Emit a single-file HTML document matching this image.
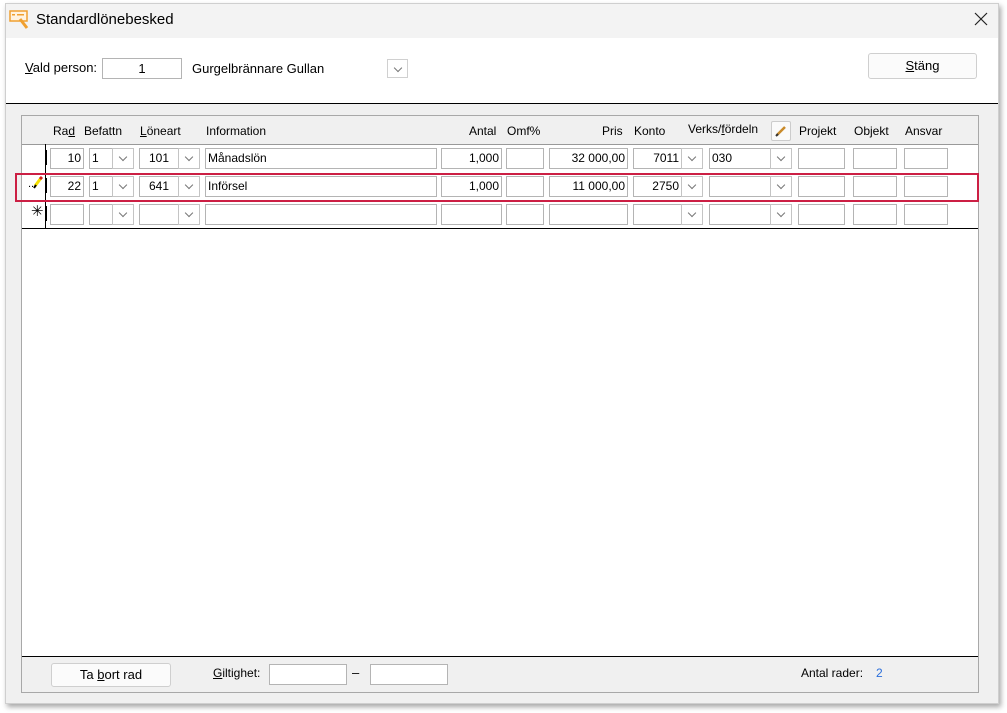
<!DOCTYPE html>
<html><head><meta charset="utf-8"><style>
*{box-sizing:border-box;margin:0;padding:0}
body{width:1007px;height:713px;background:#fff;position:relative;overflow:hidden;font-family:"Liberation Sans",Arial,sans-serif;font-size:12px;color:#000}
.a{position:absolute}
.win{left:5px;top:3px;width:994px;height:701px;background:#f0f0f0;border:1px solid #cfcfcf;box-shadow:2px 3px 5px rgba(0,0,0,.35)}
.in{position:absolute;height:21px;background:#fff;border:1px solid #b4b4b4;font-size:12px;line-height:19px;padding:0 2px;white-space:nowrap}
.r{text-align:right}
.dd{position:absolute;height:21px;width:22px;background:#fff;border:1px solid #c4c4c4}
.dd:after{content:"";position:absolute;left:7px;top:5px;width:5px;height:5px;border-right:1px solid #777;border-bottom:1px solid #777;transform:rotate(45deg)}
.tk{position:absolute;left:46px;width:1px;height:15px;background:#000}
.h{position:absolute;top:124px;font-size:12px}
.btn{position:absolute;background:#fbfbfb;border:1px solid #cfcfcf;border-radius:3px;text-align:center;font-size:13px}
u{text-decoration:underline}
</style></head><body>
<div class="a win"></div>
<div class="a" style="left:6px;top:4px;width:992px;height:34px;background:#f3f3f3"></div>
<div class="a" style="left:6px;top:38px;width:992px;height:65px;background:#fff"></div>
<div class="a" style="left:6px;top:103px;width:992px;height:1px;background:#000"></div>
<svg class="a" style="left:9px;top:9px" width="22" height="22"><rect x="1" y="2" width="17" height="10" fill="#fff3e0" stroke="#f0a030" stroke-width="1.5"/><rect x="3" y="5" width="3" height="1.5" fill="#f0a030"/><rect x="8" y="5" width="7" height="1.5" fill="#f0a030"/><line x1="11" y1="10" x2="18" y2="19" stroke="#f0a030" stroke-width="3"/></svg>
<div class="a" style="left:36px;top:11px;font-size:15px">Standardlönebesked</div>
<svg class="a" style="left:974px;top:12px" width="14" height="14"><path d="M1 1L13 13M13 1L1 13" stroke="#222" stroke-width="1.2"/></svg>
<div class="a" style="left:25px;top:60px;font-size:13px"><u>V</u>ald person:</div>
<div class="in" style="left:102px;top:58px;width:80px;height:21px;text-align:center;font-size:13px">1</div>
<div class="a" style="left:192px;top:61px;font-size:13px">Gurgelbrännare Gullan</div>
<div class="dd" style="left:387px;top:59px;width:21px;height:19px;border-color:#d0d0d0"></div>
<div class="btn" style="left:868px;top:53px;width:109px;height:26px;line-height:24px"><u>S</u>täng</div>

<div class="a" style="left:21px;top:115px;width:958px;height:578px;border:1px solid #a8a8a8;background:#f0f0f0"></div>
<div class="a" style="left:22px;top:145px;width:956px;height:511px;background:#fff"></div>
<div class="a" style="left:22px;top:144px;width:956px;height:1px;background:#999"></div>
<div class="a" style="left:45px;top:144px;width:1px;height:85px;background:#000"></div>
<div class="a" style="left:22px;top:228px;width:956px;height:1px;background:#000"></div>
<div class="a" style="left:22px;top:656px;width:956px;height:1px;background:#000"></div>

<div class="h" style="left:53px">Ra<u>d</u></div>
<div class="h" style="left:84px">Befattn</div>
<div class="h" style="left:140px"><u>L</u>öneart</div>
<div class="h" style="left:206px">Information</div>
<div class="h" style="left:469px">Antal</div>
<div class="h" style="left:507px">Omf%</div>
<div class="h" style="left:602px">Pris</div>
<div class="h" style="left:634px">Konto</div>
<div class="h" style="left:688px;top:122px">Verks/<u>f</u>ördeln</div>
<div class="a" style="left:771px;top:121px;width:20px;height:20px;background:#fafafa;border:1px solid #ccc;border-radius:2px"><svg width="18" height="18"><line x1="5" y1="13" x2="13" y2="5" stroke="#c98a2a" stroke-width="2.5"/><line x1="4" y1="14" x2="6" y2="12" stroke="#333" stroke-width="2"/></svg></div>
<div class="h" style="left:799px">Projekt</div>
<div class="h" style="left:854px">Objekt</div>
<div class="h" style="left:905px">Ansvar</div>

<div class="tk" style="top:150px"></div><div class="tk" style="top:178px"></div><div class="tk" style="top:206px"></div>
<div class="a" style="left:28px;top:178px;font-size:11px">..</div>
<svg class="a" style="left:32px;top:175px" width="12" height="14"><line x1="3" y1="11" x2="9" y2="3" stroke="#f5e000" stroke-width="3"/><line x1="8" y1="4" x2="10" y2="2" stroke="#d02020" stroke-width="3"/><line x1="2" y1="13" x2="4" y2="10" stroke="#000" stroke-width="2"/></svg>
<div class="a" style="left:31px;top:202px;font-size:15px">✳</div>

<div class="in r" style="left:50px;top:148px;width:34px">10</div>
<div class="in" style="left:89px;top:148px;width:24px">1</div><div class="dd" style="left:112px;top:148px"></div>
<div class="in" style="left:139px;top:148px;width:40px;text-align:center">101</div><div class="dd" style="left:178px;top:148px"></div>
<div class="in" style="left:205px;top:148px;width:232px">Månadslön</div>
<div class="in r" style="left:441px;top:148px;width:61px">1,000</div>
<div class="in" style="left:506px;top:148px;width:38px"></div>
<div class="in r" style="left:549px;top:148px;width:79px">32 000,00</div>
<div class="in r" style="left:633px;top:148px;width:49px">7011</div><div class="dd" style="left:681px;top:148px"></div>
<div class="in" style="left:709px;top:148px;width:62px">030</div><div class="dd" style="left:770px;top:148px"></div>
<div class="in" style="left:798px;top:148px;width:47px"></div>
<div class="in" style="left:853px;top:148px;width:44px"></div>
<div class="in" style="left:904px;top:148px;width:44px"></div>

<div class="in r" style="left:50px;top:176px;width:34px">22</div>
<div class="in" style="left:89px;top:176px;width:24px">1</div><div class="dd" style="left:112px;top:176px"></div>
<div class="in" style="left:139px;top:176px;width:40px;text-align:center">641</div><div class="dd" style="left:178px;top:176px"></div>
<div class="in" style="left:205px;top:176px;width:232px">Införsel</div>
<div class="in r" style="left:441px;top:176px;width:61px">1,000</div>
<div class="in" style="left:506px;top:176px;width:38px"></div>
<div class="in r" style="left:549px;top:176px;width:79px">11 000,00</div>
<div class="in r" style="left:633px;top:176px;width:49px">2750</div><div class="dd" style="left:681px;top:176px"></div>
<div class="in" style="left:709px;top:176px;width:62px"></div><div class="dd" style="left:770px;top:176px"></div>
<div class="in" style="left:798px;top:176px;width:47px"></div>
<div class="in" style="left:853px;top:176px;width:44px"></div>
<div class="in" style="left:904px;top:176px;width:44px"></div>

<div class="in" style="left:50px;top:204px;width:34px"></div>
<div class="in" style="left:89px;top:204px;width:24px"></div><div class="dd" style="left:112px;top:204px"></div>
<div class="in" style="left:139px;top:204px;width:40px"></div><div class="dd" style="left:178px;top:204px"></div>
<div class="in" style="left:205px;top:204px;width:232px"></div>
<div class="in" style="left:441px;top:204px;width:61px"></div>
<div class="in" style="left:506px;top:204px;width:38px"></div>
<div class="in" style="left:549px;top:204px;width:79px"></div>
<div class="in" style="left:633px;top:204px;width:49px"></div><div class="dd" style="left:681px;top:204px"></div>
<div class="in" style="left:709px;top:204px;width:62px"></div><div class="dd" style="left:770px;top:204px"></div>
<div class="in" style="left:798px;top:204px;width:47px"></div>
<div class="in" style="left:853px;top:204px;width:44px"></div>
<div class="in" style="left:904px;top:204px;width:44px"></div>

<div class="a" style="left:15px;top:173px;width:964px;height:29px;border:2px solid #cc1f44"></div>

<div class="btn" style="left:51px;top:663px;width:120px;height:24px;line-height:22px">Ta <u>b</u>ort rad</div>
<div class="a" style="left:213px;top:666px"><u>G</u>iltighet:</div>
<div class="in" style="left:269px;top:664px;width:78px;height:21px"></div>
<div class="a" style="left:352px;top:665px;font-size:13px">–</div>
<div class="in" style="left:370px;top:664px;width:78px;height:21px"></div>
<div class="a" style="left:801px;top:666px">Antal rader:</div>
<div class="a" style="left:876px;top:666px;color:#2a6edb">2</div>
</body></html>
